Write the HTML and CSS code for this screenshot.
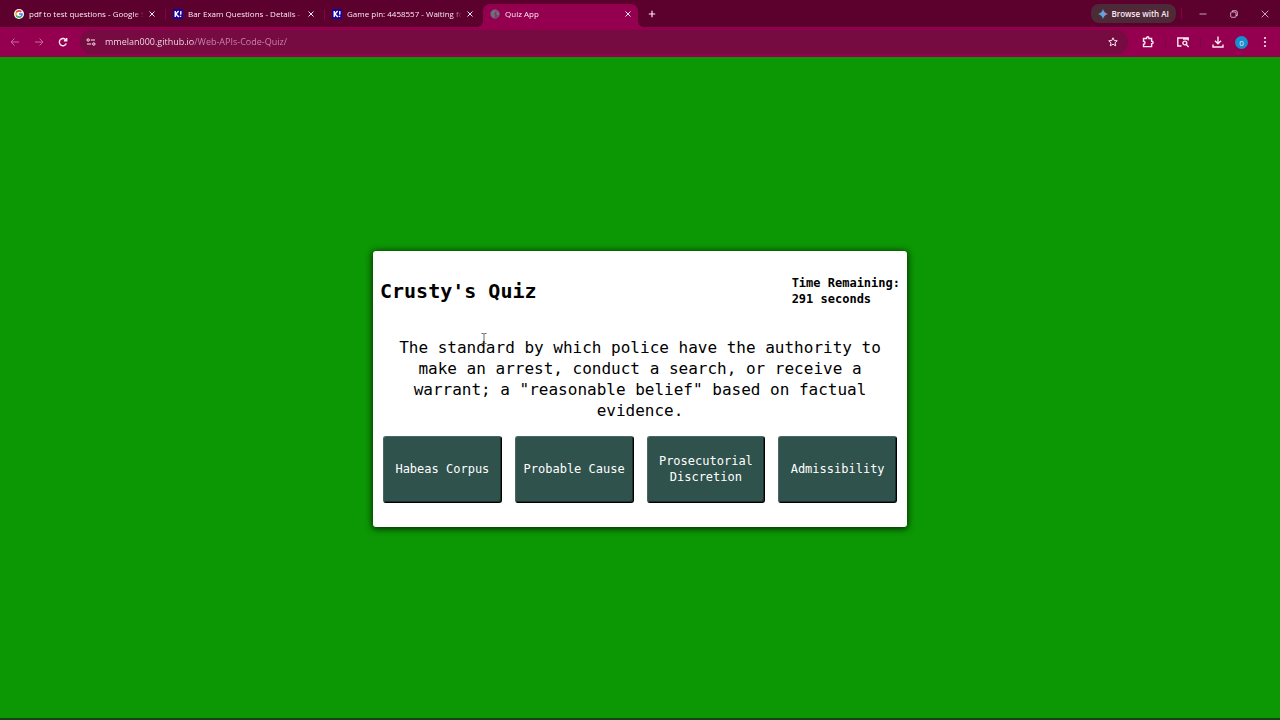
FILE: index.html
```html
<!DOCTYPE html>
<html lang="en">
<head>
<meta charset="utf-8">
<title>Quiz App</title>
<link rel="stylesheet" href="styles.css">
</head>
<body>
<div class="browser">
  <header class="tab-strip">
    <div class="tabs">
      <div class="tab">
        <svg class="favicon" viewBox="0 0 12 12"><circle cx="6" cy="6" r="6" fill="#fff"/><g fill="none" stroke-width="1.9"><path d="M2.700 4.300A3.700 3.700 0 0 1 8.700 3.400" stroke="#ea4335"/><path d="M2.700 4.300A3.700 3.700 0 0 0 2.700 7.700" stroke="#fbbc05"/><path d="M2.700 7.700A3.700 3.700 0 0 0 8.500 8.800" stroke="#34a853"/><path d="M8.500 8.800A3.700 3.700 0 0 0 9.700 6H6" stroke="#4285f4"/></g></svg>
        <button class="tab-title" type="button">pdf to test questions - Google S</button>
        <button class="icon-button close" type="button" aria-label="Close tab"><svg viewBox="0 0 8 8"><path d="M1.500 1.500l5 5M6.500 1.500l-5 5"/></svg></button>
      </div>
      <div class="tab divided">
        <svg class="favicon" viewBox="0 0 12 12"><rect width="12" height="12" rx="1" fill="#18049b"/><path d="M2.700 2.500v7M6.700 2.500L3.500 6l3.500 3.500M9.500 2.500l-.3 4.300M9 8.200v1.500" fill="none" stroke="#fff" stroke-width="1.700"/></svg>
        <button class="tab-title" type="button">Bar Exam Questions - Details - K</button>
        <button class="icon-button close" type="button" aria-label="Close tab"><svg viewBox="0 0 8 8"><path d="M1.500 1.500l5 5M6.500 1.500l-5 5"/></svg></button>
      </div>
      <div class="tab divided">
        <svg class="favicon" viewBox="0 0 12 12"><rect width="12" height="12" rx="1" fill="#18049b"/><path d="M2.700 2.500v7M6.700 2.500L3.500 6l3.500 3.500M9.500 2.500l-.3 4.300M9 8.200v1.500" fill="none" stroke="#fff" stroke-width="1.700"/></svg>
        <button class="tab-title" type="button">Game pin: 4458557 - Waiting fo</button>
        <button class="icon-button close" type="button" aria-label="Close tab"><svg viewBox="0 0 8 8"><path d="M1.500 1.500l5 5M6.500 1.500l-5 5"/></svg></button>
      </div>
      <div class="tab active">
        <svg class="favicon" viewBox="0 0 12 12"><circle cx="6" cy="6" r="5" fill="#8b3565" stroke="#697482" stroke-width="1"/><path d="M1.300 4.500C2 2 4.500 1 6.500 1.200L7 3 5.500 4l.5 1.500-2 .5 2 1.500L5.500 9 4.500 10.500C2.500 10 1 7.500 1.300 4.500zM8 2l2.500 2 .4 3-1.900 1L7.500 6z" fill="#697482"/></svg>
        <button class="tab-title" type="button">Quiz App</button>
        <button class="icon-button close" type="button" aria-label="Close tab"><svg viewBox="0 0 8 8"><path d="M1.500 1.500l5 5M6.500 1.500l-5 5"/></svg></button>
      </div>
      <button class="icon-button new-tab" type="button" aria-label="New tab"><svg viewBox="0 0 8 8"><path d="M4 .8v6.400M.8 4h6.400"/></svg></button>
    </div>
    <button class="ai-button" type="button"><svg viewBox="0 0 10 10"><defs><linearGradient id="spark"><stop offset="0" stop-color="#51b878"/><stop offset=".45" stop-color="#55a5ef"/><stop offset="1" stop-color="#df7590"/></linearGradient></defs><path d="M5 0Q6 4 10 5 6 6 5 10 4 6 0 5 4 4 5 0z" fill="url(#spark)"/></svg>Browse with AI</button>
    <div class="window-controls">
      <button class="icon-button" type="button" aria-label="Minimize"><svg viewBox="0 0 8 8"><path d="M.5 4h7"/></svg></button>
      <button class="icon-button" type="button" aria-label="Restore"><svg viewBox="0 0 8 8"><rect x=".7" y="2" width="5.300" height="5.300" rx="1"/><path d="M2.500 1.800V.7h3.300q1.500 0 1.500 1.500v3.300H6"/></svg></button>
      <button class="icon-button" type="button" aria-label="Close"><svg viewBox="0 0 8 8"><path d="M.7.7l6.600 6.600M7.300.7L.7 7.300"/></svg></button>
    </div>
  </header>
  <nav class="toolbar" aria-label="Browser">
    <button class="icon-button dim" type="button" aria-label="Back"><svg viewBox="0 0 10 10"><path d="M9 5H1M4.500 1.500L1 5l3.500 3.500"/></svg></button>
    <button class="icon-button dim" type="button" aria-label="Forward"><svg viewBox="0 0 10 10"><path d="M1 5h8M5.500 1.500L9 5 5.500 8.500"/></svg></button>
    <button class="icon-button bold" type="button" aria-label="Reload"><svg viewBox="0 0 10 10"><path d="M8.300 6.500A3.600 3.600 0 1 1 8 3.200M8.700 1v2.800H5.900"/></svg></button>
    <div class="omnibox">
      <button class="icon-button site" type="button" aria-label="Site information"><svg viewBox="0 0 10 10"><circle cx="2.200" cy="3" r="1.200"/><path d="M4.800 3H9M1 7h4.200"/><circle cx="7.800" cy="7" r="1.200"/></svg></button>
      <input class="address" type="text" aria-label="Address" value="mmelan000.github.io/Web-APIs-Code-Quiz/">
      <button class="icon-button star" type="button" aria-label="Bookmark"><svg viewBox="0 0 10 10"><path d="M5 .8l1.250 2.700 3 .3L7 5.800l.7 3L5 7.250 2.300 8.800l.7-3L.75 3.800l3-.3z"/></svg></button>
    </div>
    <div class="actions">
      <button class="icon-button large bold" type="button" aria-label="Extensions"><svg viewBox="0 0 12 12"><path d="M1.500 2.500h3V2a1.200 1.200 0 0 1 2.400 0v.5h2.700v2.700h.3a1.200 1.200 0 0 1 0 2.400h-.3v3H1.500V8.200q1.500 0 1.500-1.500T1.500 5.200z"/></svg></button>
      <span class="divider"></span>
      <button class="icon-button large bold" type="button" aria-label="Search in page"><svg viewBox="0 0 12 12"><path d="M4.500 10H.8V2h10.400v2.500M6 3h5"/><circle cx="7.800" cy="7" r="1.900"/><path d="M9.300 8.500l2.300 2.500"/></svg></button>
      <span class="divider"></span>
      <button class="icon-button large bold" type="button" aria-label="Downloads"><svg viewBox="0 0 12 12"><path d="M6 .5v7M3 4.700l3 3 3-3M1 8.500V11h10V8.500"/></svg></button>
      <button class="profile" type="button" aria-label="Profile">0</button>
      <button class="icon-button large" type="button" aria-label="Menu"><svg viewBox="0 0 12 12" class="dots"><circle cx="6" cy="2" r="1.100"/><circle cx="6" cy="6" r="1.100"/><circle cx="6" cy="10" r="1.100"/></svg></button>
    </div>
  </nav>
  <main class="page">
    <section class="card">
      <header class="card-header">
        <h1>Crusty's Quiz</h1>
        <p class="timer">Time Remaining:<br>291 seconds</p>
      </header>
      <p class="question">The standard by which police have the authority to make an arrest, conduct a search, or receive a warrant; a "reasonable belief" based on factual evidence.</p>
      <div class="answers">
        <button class="answer" type="button">Habeas Corpus</button>
        <button class="answer" type="button">Probable Cause</button>
        <button class="answer" type="button">Prosecutorial Discretion</button>
        <button class="answer" type="button">Admissibility</button>
      </div>
      <svg class="text-cursor" viewBox="0 0 6 11"><path d="M.5.5h1.700l.8.7.8-.7h1.700M3 1.200v8.600M.5 10.500h1.700l.8-.7.8.7h1.700"/></svg>
    </section>
  </main>
</div>
</body>
</html>
```
FILE: styles.css
```css
* { box-sizing: border-box; }

body { margin: 0; }

button, input {
  margin: 0;
  padding: 0;
  border: 0;
  background: none;
  color: inherit;
  font: inherit;
}

.browser {
  display: flex;
  flex-direction: column;
  min-height: 100vh;
  background: #94004f;
  color: #fbeaf3;
  font-family: "Open Sans", "Noto Sans", sans-serif;
  font-size: 8px;
}

.tab-strip {
  display: flex;
  align-items: center;
  height: 27px;
  padding: 0 3px 0 6px;
  background: #5c002e;
}

.tabs {
  display: flex;
  flex: 1;
  align-self: stretch;
  align-items: center;
  min-width: 0;
}

.tab {
  display: flex;
  flex: 0 1 159px;
  align-items: center;
  align-self: flex-end;
  height: 23px;
  min-width: 0;
  padding: 0 9px 4px 8px;
}

.divided {
  background: linear-gradient(#850044, #850044) 0 5px / 1px 11px no-repeat;
}

.active {
  position: relative;
  flex-basis: 155px;
  padding: 0 6px 4px 7px;
  border-radius: 7px 7px 0 0;
  background: #94004f;
}

.active::before,
.active::after {
  content: "";
  position: absolute;
  bottom: 0;
  width: 6px;
  height: 6px;
}

.active::before {
  left: -6px;
  background: radial-gradient(circle at 0 0, transparent 6px, #94004f 6px);
}

.active::after {
  right: -6px;
  background: radial-gradient(circle at 100% 0, transparent 6px, #94004f 6px);
}

.favicon {
  flex: none;
  width: 10px;
  height: 10px;
  margin-right: 5px;
}

.tab-title {
  flex: 1;
  min-width: 0;
  text-align: left;
  white-space: nowrap;
  mask-image: linear-gradient(to right, #000 calc(100% - 10px), transparent);
}

.icon-button {
  display: grid;
  flex: none;
  place-items: center;
  width: 24px;
  height: 20px;
}

.icon-button svg {
  width: 10px;
  height: 10px;
  fill: none;
  stroke: currentColor;
}

.close {
  width: 8px;
  margin-left: 4px;
}

.close svg,
.new-tab svg,
.window-controls svg {
  width: 8px;
  height: 8px;
}

.new-tab { margin-left: 2px; }

.new-tab svg { stroke-width: 1.2; }

.ai-button {
  display: flex;
  align-items: center;
  gap: 3px;
  height: 19px;
  padding: 0 7px;
  border-radius: 8px;
  background: #4c2a38;
  font-weight: 600;
}

.ai-button svg {
  width: 10px;
  height: 10px;
}

.window-controls {
  display: flex;
  gap: 7px;
  margin-left: 5px;
  padding-left: 10px;
  background: linear-gradient(#850044, #850044) 0 50% / 1px 11px no-repeat;
}

.window-controls svg { stroke-width: 0.7; }

.toolbar {
  display: flex;
  align-items: center;
  height: 30px;
  padding: 0 3px;
}

.dim { color: #c96a9c; }

.bold svg { stroke-width: 1.4; }

.omnibox {
  display: flex;
  flex: 1;
  align-items: center;
  height: 24px;
  margin-left: 5px;
  padding-right: 3px;
  border-radius: 12px;
  background: #750b41;
}

.site { width: 22px; }

.address {
  flex: 1;
  min-width: 0;
  margin-left: 3px;
  background: linear-gradient(to right, #fbeaf3 89px, #d08aae 89px) text;
  -webkit-text-fill-color: transparent;
  font-size: 9px;
  line-height: 14px;
}

.actions {
  display: flex;
  align-items: center;
  gap: 5px;
  margin-left: 8px;
}

.divider {
  width: 1px;
  height: 11px;
  background: #7d0745;
}

.large svg {
  width: 12px;
  height: 12px;
}

.actions .dots {
  fill: currentColor;
  stroke: none;
}

.profile {
  width: 13px;
  height: 13px;
  border-radius: 50%;
  background: #1590cf;
  line-height: 13px;
}

.page {
  display: grid;
  flex: 1;
  place-items: center;
  background: #0c9705;
  box-shadow: inset 0 -2px #164314;
  color: #000;
  font-family: "DejaVu Sans Mono", "Liberation Mono", monospace;
}

.card {
  position: relative;
  width: 534px;
  max-width: 100%;
  padding: 23px 7px 24px;
  border-radius: 3px;
  background: #fff;
  box-shadow: 0 1px 6px 1px #022c00;
}

.card-header {
  display: flex;
  align-items: center;
  justify-content: space-between;
}

h1 {
  margin: 0;
  font-size: 20px;
  line-height: 34px;
}

.timer {
  margin: 0;
  font-size: 12px;
  font-weight: bold;
  line-height: 16px;
}

.question {
  margin: 29px 16px 15px;
  font-size: 16px;
  line-height: 21px;
  text-align: center;
}

.answers {
  display: grid;
  grid-template-columns: repeat(4, 1fr);
  gap: 13px;
  padding: 0 3px;
}

.answer {
  min-height: 67px;
  border: 1px solid #4a6662;
  border-right-color: #000;
  border-bottom-color: #000;
  border-radius: 3px;
  background: #30524d;
  box-shadow: inset -1px -1px #1c302d;
  color: #fff;
  font-size: 12px;
  line-height: 16px;
}

.text-cursor {
  position: absolute;
  top: 82px;
  left: 108px;
  width: 6px;
  height: 11px;
  fill: none;
  stroke: #444;
  stroke-width: 0.8;
}
```
